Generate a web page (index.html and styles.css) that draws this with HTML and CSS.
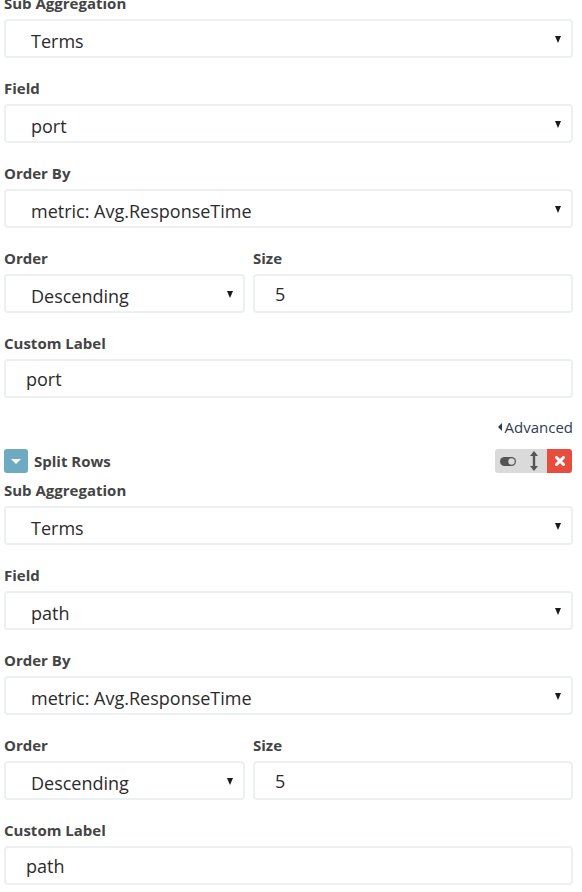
FILE: index.html
```html
<!DOCTYPE html>
<html>
<head>
<meta charset="utf-8">
<link rel="stylesheet" href="styles.css">
</head>
<body>
<div class="page">
  <div class="group">
    <div class="lbl">Sub Aggregation</div>
    <div class="select"><span class="val">Terms</span><i class="caret"></i></div>
  </div>
  <div class="group">
    <div class="lbl">Field</div>
    <div class="select"><span class="val">port</span><i class="caret"></i></div>
  </div>
  <div class="group">
    <div class="lbl">Order By</div>
    <div class="select"><span class="val">metric: Avg.ResponseTime</span><i class="caret"></i></div>
  </div>
  <div class="row2">
    <div class="group">
      <div class="lbl">Order</div>
      <div class="select"><span class="val">Descending</span><i class="caret"></i></div>
    </div>
    <div class="group">
      <div class="lbl">Size</div>
      <div class="input">5</div>
    </div>
  </div>
  <div class="group last">
    <div class="lbl">Custom Label</div>
    <div class="input">port</div>
  </div>

  <div class="advanced"><i class="adv-caret"></i><span>Advanced</span></div>

  <div class="agg-head">
    <div class="head-left">
      <span class="toggle-btn"><i class="down"></i></span>
      <span class="head-title">Split Rows</span>
    </div>
    <div class="btn-group">
      <span class="seg gray">
        <svg width="16" height="9" viewBox="0 0 16 9"><rect x="0" y="0" width="16" height="9" rx="4.5" fill="#555"/><circle cx="11.5" cy="4.5" r="3.2" fill="#dadada"/></svg>
      </span>
      <span class="seg gray">
        <svg width="8" height="20" viewBox="0 0 8 20"><path d="M4 0 L8 5 L5.2 5 L5.2 15 L8 15 L4 20 L0 15 L2.8 15 L2.8 5 L0 5 Z" fill="#555"/></svg>
      </span>
      <span class="seg red">
        <svg width="10" height="10" viewBox="0 0 10 10"><path d="M1.5 1.5 L8.5 8.5 M8.5 1.5 L1.5 8.5" stroke="#fff" stroke-width="3" stroke-linecap="square"/></svg>
      </span>
    </div>
  </div>

  <div class="group">
    <div class="lbl">Sub Aggregation</div>
    <div class="select"><span class="val">Terms</span><i class="caret"></i></div>
  </div>
  <div class="group">
    <div class="lbl">Field</div>
    <div class="select"><span class="val">path</span><i class="caret"></i></div>
  </div>
  <div class="group">
    <div class="lbl">Order By</div>
    <div class="select"><span class="val">metric: Avg.ResponseTime</span><i class="caret"></i></div>
  </div>
  <div class="row2">
    <div class="group">
      <div class="lbl">Order</div>
      <div class="select"><span class="val">Descending</span><i class="caret"></i></div>
    </div>
    <div class="group">
      <div class="lbl">Size</div>
      <div class="input">5</div>
    </div>
  </div>
  <div class="group">
    <div class="lbl">Custom Label</div>
    <div class="input">path</div>
  </div>
</div>
</body>
</html>
```

FILE: styles.css
```css
html, body {
  margin: 0;
  padding: 0;
  background: #ffffff;
}
body {
  font-family: "Open Sans", "Liberation Sans", sans-serif;
  color: #444444;
}
.page {
  margin-top: -6px;
  padding: 0 9px 0 4px;
}
.group {
  margin-bottom: 21px;
}
.group.last {
  margin-bottom: 19px;
}
.row2 .group {
  margin-bottom: 0;
}
.row2 {
  display: grid;
  grid-template-columns: 241px 1fr;
  column-gap: 8px;
  margin-bottom: 21px;
}
.lbl {
  font-size: 15px;
  font-weight: 700;
  line-height: 18px;
  height: 18px;
  color: #444444;
  margin-bottom: 7px;
}
.select, .input {
  box-sizing: border-box;
  height: 39px;
  border: 2px solid #ecf0f1;
  border-radius: 4px;
  background: #ffffff;
  font-size: 18px;
  color: #2b2b2b;
  display: flex;
  align-items: center;
}
.select {
  padding: 4px 10px 0 25px;
  justify-content: space-between;
  overflow: hidden;
}
.input {
  padding: 0 10px 0 20px;
}
.val {
  white-space: nowrap;
}
.caret {
  display: block;
  width: 0;
  height: 0;
  border-left: 3.5px solid transparent;
  border-right: 3.5px solid transparent;
  border-top: 7px solid #1a1a1a;
  margin-top: -2px;
}
.advanced {
  display: flex;
  justify-content: flex-end;
  align-items: center;
  height: 20px;
  font-size: 15px;
  color: #2c3e50;
  margin-bottom: 12px;
}
.adv-caret {
  display: block;
  width: 0;
  height: 0;
  border-top: 4px solid transparent;
  border-bottom: 4px solid transparent;
  border-right: 4px solid #2c3e50;
  margin-right: 3px;
}
.agg-head {
  display: flex;
  justify-content: space-between;
  align-items: center;
  height: 24px;
  margin-bottom: 8px;
}
.head-left {
  display: flex;
  align-items: center;
  gap: 6px;
}
.toggle-btn {
  width: 24px;
  height: 24px;
  border-radius: 3px;
  background: #6eaac2;
  display: flex;
  align-items: center;
  justify-content: center;
}
.down {
  display: block;
  width: 0;
  height: 0;
  border-left: 5px solid transparent;
  border-right: 5px solid transparent;
  border-top: 5px solid #ffffff;
}
.head-title {
  font-size: 15px;
  font-weight: 700;
  color: #444444;
}
.btn-group {
  display: flex;
  height: 24px;
  border-radius: 3px;
  overflow: hidden;
  margin-right: 1px;
}
.seg {
  width: 26px;
  height: 24px;
  display: flex;
  align-items: center;
  justify-content: center;
}
.seg.gray {
  background: #dadada;
}
.seg.red {
  background: #e74c3c;
  width: 25px;
}
```
